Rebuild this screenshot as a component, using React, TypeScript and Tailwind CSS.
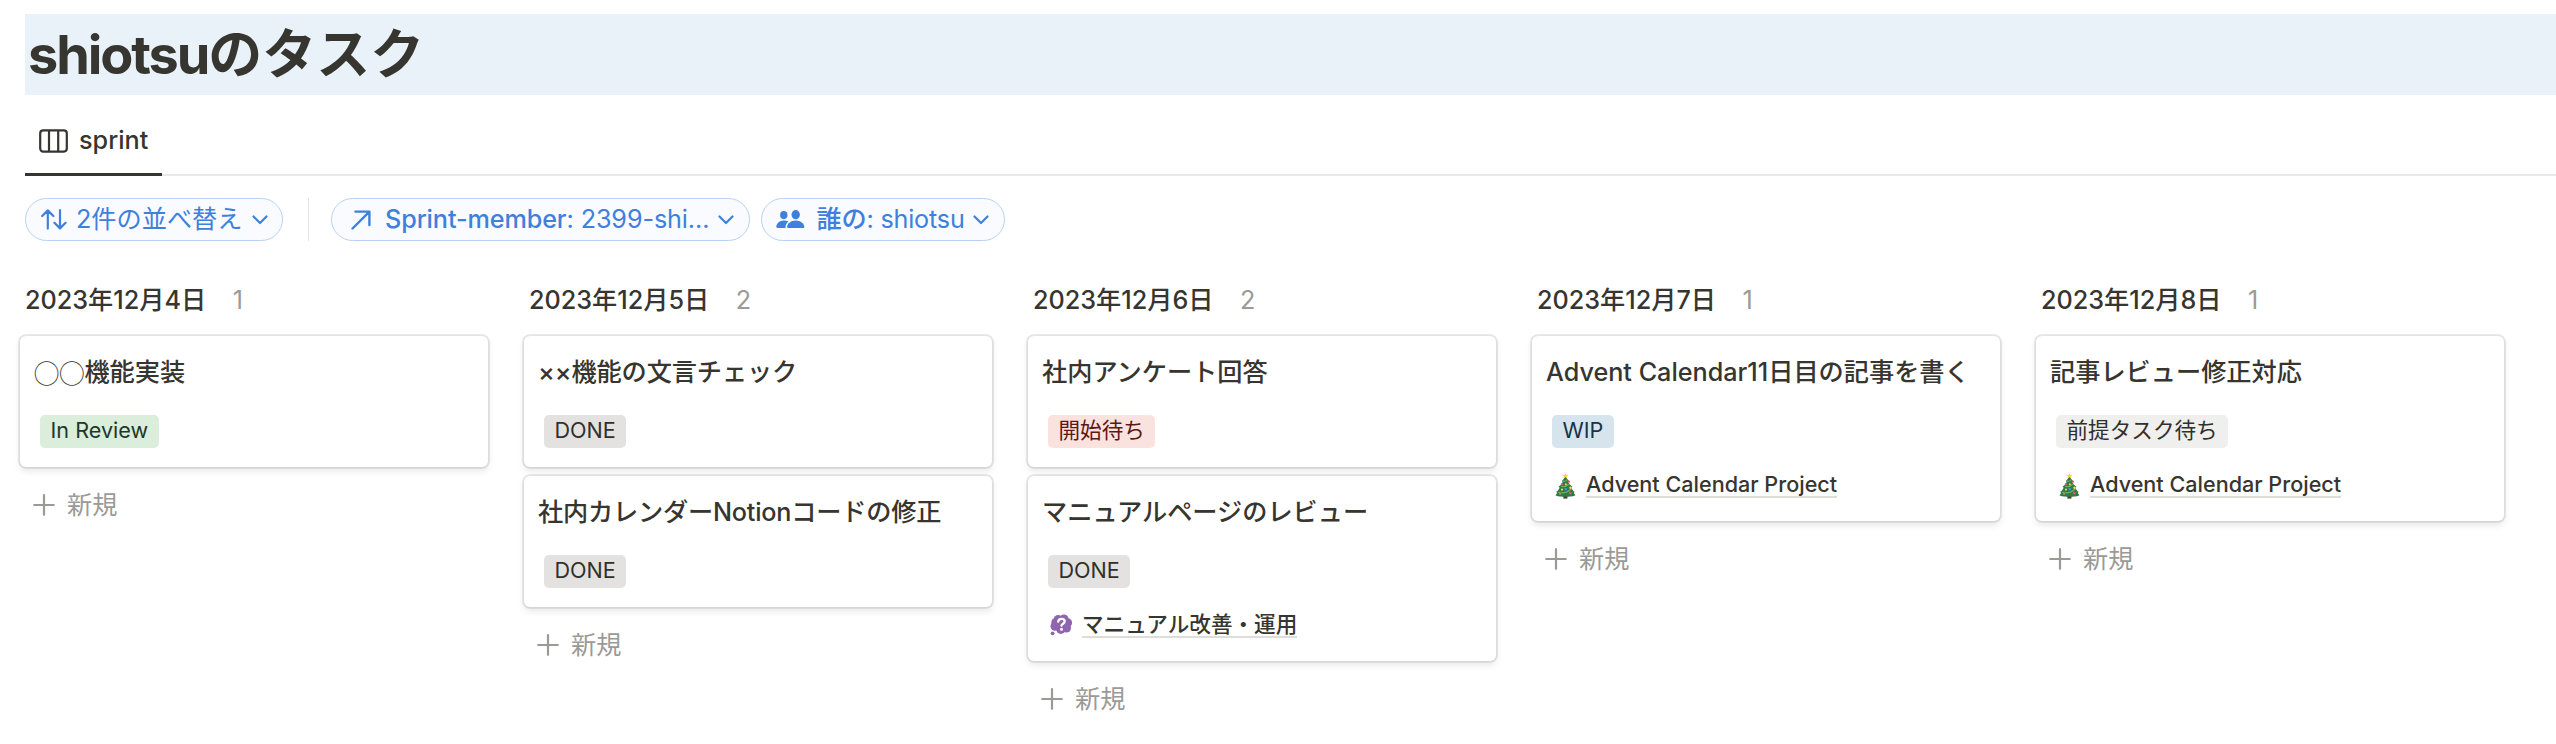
import type { ReactNode } from "react";

type Link = { icon: "tree" | "thought"; label: string };
type Task = { title: string; titleClass?: string; circles?: boolean; tag: string; tone: string; link?: Link };
type Column = { date: string; tasks: Task[] };

const DONE = "bg-[#e3e2e0] text-[#32302c]";
const project: Link = { icon: "tree", label: "Advent Calendar Project" };

const columns: Column[] = [
  {
    date: "2023年12月4日",
    tasks: [{ title: "機能実装", circles: true, tag: "In Review", tone: "bg-[#dbeddb] text-[#1c3829]" }],
  },
  {
    date: "2023年12月5日",
    tasks: [
      { title: "××機能の文言チェック", titleClass: "tracking-[-0.1px]", tag: "DONE", tone: DONE },
      { title: "社内カレンダーNotionコードの修正", titleClass: "tracking-[-0.2px]", tag: "DONE", tone: DONE },
    ],
  },
  {
    date: "2023年12月6日",
    tasks: [
      { title: "社内アンケート回答", tag: "開始待ち", tone: "bg-[#fae3df] text-[#5d1715]" },
      {
        title: "マニュアルページのレビュー",
        tag: "DONE",
        tone: DONE,
        link: { icon: "thought", label: "マニュアル改善・運用" },
      },
    ],
  },
  {
    date: "2023年12月7日",
    tasks: [
      { title: "Advent Calendar11日目の記事を書く", tag: "WIP", tone: "bg-[#d6e4ee] text-[#183347]", link: project },
    ],
  },
  {
    date: "2023年12月8日",
    tasks: [{ title: "記事レビュー修正対応", tag: "前提タスク待ち", tone: "bg-[#efefee] text-[#32302c]", link: project }],
  },
];

function BoardIcon() {
  return (
    <svg width="29" height="24" viewBox="0 0 29 24" fill="none" stroke="currentColor" strokeWidth="2.2">
      <rect x="1.2" y="1.4" width="26.6" height="21.2" rx="3" />
      <path d="M10 1.4v21.2M19.2 1.4v21.2" />
    </svg>
  );
}

function SortIcon() {
  return (
    <svg width="26" height="21" viewBox="0 0 26 21" fill="none" stroke="currentColor" strokeWidth="2.2" strokeLinecap="round" strokeLinejoin="round">
      <path d="M6.8 19.6V1.6M1.2 7l5.6-5.6L12.4 7M19 1.2v18M13.4 13.8l5.6 5.6 5.6-5.6" />
    </svg>
  );
}

function ArrowIcon() {
  return (
    <svg width="20" height="20" viewBox="0 0 20 20" fill="none" stroke="currentColor" strokeWidth="2.4" strokeLinecap="round" strokeLinejoin="round">
      <path d="M1.5 18.5 18.2 1.8M4.4 1.6h14v13.4" />
    </svg>
  );
}

function PeopleIcon() {
  return (
    <svg width="29" height="19" viewBox="0 0 29 19" fill="currentColor">
      <ellipse cx="7.8" cy="5.1" rx="3.7" ry="4.1" />
      <path d="M12.6 11.3c-1.9 1.5-3.1 3.7-3.1 5.6 0 .4.1.8.2 1.1H1.6C.8 18 .3 17.5.3 16.8c0-2.9 3-6.4 7.5-6.4 1.8 0 3.4.4 4.8.9z" />
      <ellipse cx="19.7" cy="4.7" rx="4.2" ry="4.6" />
      <path d="M12.6 18c-1 0-1.5-.5-1.5-1.3 0-2.7 3.3-6.3 8.6-6.3s8.6 3.6 8.6 6.3c0 .8-.5 1.3-1.5 1.3z" />
    </svg>
  );
}

function Chevron() {
  return (
    <svg width="16" height="10" viewBox="0 0 16 10" fill="none" stroke="currentColor" strokeWidth="2.2" strokeLinecap="round" strokeLinejoin="round">
      <path d="m1.5 1.5 6.5 6.5 6.5-6.5" />
    </svg>
  );
}

function ThoughtIcon() {
  return (
    <svg className="-ml-px" width="23" height="23" viewBox="0 0 23 23">
      <g fill="#9065b0">
        <circle cx="11.5" cy="10" r="7.5" />
        <circle cx="8.2" cy="5.5" r="4.5" />
        <circle cx="14" cy="5" r="4.6" />
        <circle cx="17.6" cy="8.8" r="4.5" />
        <circle cx="16.4" cy="14" r="4.6" />
        <circle cx="10.8" cy="15.3" r="4.6" />
        <circle cx="5" cy="12.3" r="4.5" />
        <circle cx="5.4" cy="8.2" r="4" />
        <circle cx="2.6" cy="19.3" r="1.9" />
      </g>
      <path d="M8.2 7.6c.3-1.800 1.600-2.700 3.300-2.700 1.900 0 3.200 1.100 3.200 2.600 0 2.200-3.200 2.200-3.200 4.200" fill="none" stroke="#fff" strokeWidth="2.3" strokeLinecap="round" />
      <circle cx="11.5" cy="15.2" r="1.5" fill="#fff" />
    </svg>
  );
}

function TreeIcon() {
  return (
    <svg width="21" height="26" viewBox="0 0 21 26">
      <path d="M8.4 21.5h4v4.1h-4z" fill="#5f2f1e" />
      <path
        d="M10.4 3c1.2 2.3 2.2 3.6 3.7 4.9l-1 .8c1.2 2.3 2.5 3.7 4.3 5l-1.2 1c1 2 2.1 3.2 3.5 4.3l-.9.7c.4 1 1 1.8 1.700 2.500-3.400 1.500-6.500 1.600-10.200 1.600S3.500 23.700.400 22.200c.8-.7 1.400-1.500 1.800-2.500l-1-.6c1.500-1.200 2.500-2.400 3.500-4.400l-1.200-.9c1.800-1.300 3.100-2.800 4.300-5.100l-1-.8C8.300 6.600 9.200 5.300 10.400 3z"
        fill="#2f7a47"
      />
      <path d="M6 13.200c3 .9 5.500.2 8-2.200M3.200 19.300c4.500 1.400 9.500 0 13.400-3.800M7.900 8.200c1.700.3 3-.2 4.200-1.400" fill="none" stroke="#6fae62" strokeWidth="1.200" />
      <path d="m10.400 0 .9 1.800 2 .2-1.500 1.300.5 2-1.900-1.100-1.900 1.100.5-2L7.500 2l2-.2z" fill="#ffd43a" />
      <circle cx="13.8" cy="8.6" r="1.2" fill="#e2566b" />
      <circle cx="6.9" cy="11.4" r="1.1" fill="#e2566b" />
      <circle cx="15.3" cy="20.2" r="1.4" fill="#e2566b" />
      <circle cx="5" cy="20.8" r="1" fill="#d98b4a" />
      <circle cx="10.8" cy="11.2" r="1" fill="#f3d34a" />
      <circle cx="15.4" cy="14.8" r="1.2" fill="#f3d34a" />
      <circle cx="7" cy="16.6" r="1.1" fill="#f3d34a" />
      <circle cx="10.8" cy="16" r="1.2" fill="#4f94e0" />
    </svg>
  );
}

function PlusIcon() {
  return (
    <svg width="22" height="22" viewBox="0 0 22 22" fill="none" stroke="currentColor" strokeWidth="2.2" strokeLinecap="round">
      <path d="M11 1.2v19.6M1.2 11h19.6" />
    </svg>
  );
}

function Pill({ className, children }: { className: string; children: ReactNode }) {
  return (
    <button
      className={`flex h-[43px] shrink-0 items-center whitespace-nowrap rounded-full border border-[#b9d2f1] bg-[#f9fbff] text-left text-[#3f80dc] ${className}`}
    >
      {children}
    </button>
  );
}

function Card({ task }: { task: Task }) {
  return (
    <article className="rounded-[6px] bg-white px-[14px] pt-[20.6px] pb-[19.6px] shadow-[0_0_0_1.8px_rgba(15,15,15,0.1),0_3.6px_7.2px_rgba(15,15,15,0.1)]">
      <h3 className={`flex h-8 items-center whitespace-nowrap font-medium ${task.titleClass ?? ""}`}>
        {task.circles && <span className="font-['Noto_Sans_CJK_JP',sans-serif] leading-none">◯◯</span>}
        {task.title}
      </h3>
      <div className="mt-[26px] flex pl-[6px]">
        <span className={`flex h-[33px] items-center rounded-[5px] px-[10.5px] text-[21.6px] ${task.tone}`}>{task.tag}</span>
      </div>
      {task.link && (
        <div className="mt-[22px] flex h-8 items-center pl-[6px] text-[21.6px] font-medium">
          <span className="flex w-[34px] items-center pl-[3px]">
            {task.link.icon === "tree" ? <TreeIcon /> : <ThoughtIcon />}
          </span>
          <span className="border-b-2 border-[#deddda] leading-[23px]">{task.link.label}</span>
        </div>
      )}
    </article>
  );
}

export default function App() {
  return (
    <main className="h-[744px] w-full overflow-hidden bg-white pt-[14px] font-['Inter','Noto_Sans_CJK_JP',sans-serif] text-[25.2px] leading-none text-[#37352f]">
      <h1 className="ml-[25px] h-[81px] bg-[#e9f2f8] pl-[3px] text-[54px] font-bold leading-[81px]">
        <span className="tracking-[-2.1px]">shiotsu</span>のタスク
      </h1>

      <nav className="ml-[25px] flex h-[81px] items-end border-b-2 border-[#e9e9e7]">
        <div className="-mb-[2px] flex h-[71px] w-[137px] items-center border-b-[3px] border-[#37352f] pt-[4px] pl-[14px]">
          <BoardIcon />
          <span className="ml-[11px] font-medium">sprint</span>
        </div>
      </nav>

      <div className="mt-[22px] ml-[25px] flex items-center">
        <Pill className="w-[258px] pl-[15px]">
          <SortIcon />
          <span className="ml-[9px] w-[176px]">2件の並べ替え</span>
          <Chevron />
        </Pill>
        <div className="ml-[25px] h-[43px] w-px bg-[#e4e4e2]" />
        <Pill className="ml-[22px] w-[419px] pl-[18.5px]">
          <ArrowIcon />
          <span className="ml-[14.5px] w-[333px] tracking-[-0.1px]">
            <span className="font-medium">Sprint-member</span>: 2399-shi...
          </span>
          <Chevron />
        </Pill>
        <Pill className="ml-[11px] w-[243.5px] pl-[14px]">
          <PeopleIcon />
          <span className="ml-[11.5px] w-[156.5px] tracking-[-0.2px]">
            <span className="font-medium">誰の</span>: shiotsu
          </span>
          <Chevron />
        </Pill>
      </div>

      <div className="mt-[44px] ml-[20px] flex gap-[36px]">
        {columns.map((column) => (
          <section key={column.date} className="w-[468px] shrink-0">
            <header className="flex h-8 items-center gap-[26.5px] pl-[5px]">
              <h2 className="font-medium">{column.date}</h2>
              <span className="text-[#9b9a97]">{column.tasks.length}</span>
            </header>
            <div className="mt-[19px] flex flex-col gap-[8.8px]">
              {column.tasks.map((task) => (
                <Card key={task.title} task={task} />
              ))}
            </div>
            <button className="mt-[22px] flex h-8 items-center gap-[12px] pl-[13px] text-[#9b9a97]">
              <PlusIcon />
              新規
            </button>
          </section>
        ))}
      </div>
    </main>
  );
}
